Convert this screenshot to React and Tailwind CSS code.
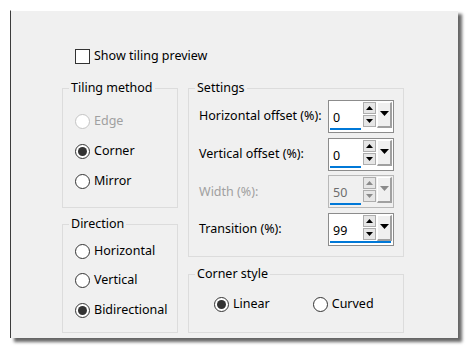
import React from "react";

const font = { fontFamily: '"Noto Sans", "Open Sans", sans-serif' };

const Radio = ({ label, checked, disabled }) => (
  <div className="flex items-center h-[16px]">
    <div
      className={
        "w-[15px] h-[15px] rounded-full border bg-white flex items-center justify-center " +
        (disabled ? "border-[#c4c4c4]" : "border-[#333333]")
      }
    >
      {checked && <div className="w-[9px] h-[9px] rounded-full bg-[#333333]" />}
    </div>
    <span className={"ml-[4px] " + (disabled ? "text-[#a0a0a0]" : "text-black")}>{label}</span>
  </div>
);

const GroupBox = ({ title, className, children }) => (
  <div className={"relative border border-[#dcdcdc] " + className}>
    <span className="absolute -top-[10px] left-[6px] bg-[#f0f0f0] px-[2px] leading-[18px] text-black">
      {title}
    </span>
    {children}
  </div>
);

const Arrow = ({ up, disabled }) => (
  <svg width="7" height="4" viewBox="0 0 7 4">
    <path
      d={up ? "M0 4 L3.5 0 L7 4 Z" : "M0 0 L3.5 4 L7 0 Z"}
      fill={disabled ? "#8a8a8a" : "#000"}
    />
  </svg>
);

const SpinBox = ({ value, disabled, focused }) => (
  <div
    className={
      "w-[66px] h-[33px] border flex flex-col " +
      (disabled ? "border-[#b8b8b8] bg-[#f0f0f0]" : "border-[#8c8c8c] bg-white")
    }
  >
    <div className="flex flex-1">
      <div
        className={
          "w-[34px] pl-[4px] pt-[9px] leading-[16px] " +
          (disabled ? "text-[#6d6d6d]" : "text-black")
        }
      >
        {value}
      </div>
      <div className="flex flex-col gap-[1px] mt-[1px]">
        <div className="w-[13px] h-[12px] border border-[#adadad] bg-[#e6e6e6] flex items-center justify-center">
          <Arrow up disabled={disabled} />
        </div>
        <div className="w-[13px] h-[12px] border border-[#adadad] bg-[#e6e6e6] flex items-center justify-center">
          <Arrow disabled={disabled} />
        </div>
      </div>
      <div className="ml-[1px] mt-[1px] w-[15px] h-[26px] bg-[#f0f0f0] border-r-2 border-b-2 border-[#a0a0a0] border-t border-t-white border-l border-l-white flex justify-center pt-[8px]">
        <svg width="9" height="5" viewBox="0 0 9 5">
          <path d="M0 0 L4.5 5 L9 0 Z" fill={disabled ? "#8a8a8a" : "#000"} />
        </svg>
      </div>
    </div>
    <div
      className={
        "h-[2px] bg-[#0078d7] ml-[1px] mb-[2px] " + (focused ? "w-[61px]" : "w-[31px]")
      }
    />
  </div>
);

const SettingRow = ({ label, value, disabled, focused }) => (
  <div className="flex items-center justify-between">
    <span className={disabled ? "text-[#a0a0a0]" : "text-black"}>{label}</span>
    <SpinBox value={value} disabled={disabled} focused={focused} />
  </div>
);

export default function App() {
  return (
    <div className="w-[469px] h-[350px] bg-white pt-[10px] pl-[10px]" style={font}>
      <div className="w-[448px] h-[328px] bg-[#f0f0f0] border-l border-l-[#3c3c3c] border-t border-t-[#ffffff] shadow-[4px_4px_3px_rgba(0,0,0,0.6)] pl-[51px] pt-[37px] text-[12.5px]">
        <div className="flex items-center h-[16px] pl-[13px]">
          <div className="w-[15px] h-[15px] border border-[#333333] bg-white" />
          <span className="ml-[4px] text-black">Show tiling preview</span>
        </div>

        <div className="flex gap-[10px] mt-[24px]">
          <div className="flex flex-col gap-[16px]">
            <GroupBox title="Tiling method" className="w-[116px] h-[120px] pt-[24px] pl-[12px]">
              <div className="flex flex-col gap-[14px]">
                <Radio label="Edge" disabled />
                <Radio label="Corner" checked />
                <Radio label="Mirror" />
              </div>
            </GroupBox>
            <GroupBox title="Direction" className="w-[116px] h-[109px] pt-[18px] pl-[12px]">
              <div className="flex flex-col gap-[13.5px]">
                <Radio label="Horizontal" />
                <Radio label="Vertical" />
                <Radio label="Bidirectional" checked />
              </div>
            </GroupBox>
          </div>

          <div className="flex flex-col gap-[17px]">
            <GroupBox title="Settings" className="w-[216px] h-[169px] pt-[11px] pl-[10px] pr-[9px]">
              <div className="flex flex-col gap-[4.7px]">
                <SettingRow label="Horizontal offset (%):" value="0" />
                <SettingRow label="Vertical offset (%):" value="0" />
                <SettingRow label="Width (%):" value="50" disabled />
                <SettingRow label="Transition (%):" value="99" focused />
              </div>
            </GroupBox>
            <GroupBox title="Corner style" className="w-[216px] h-[59px] pt-[21px] pl-[25px]">
              <div className="flex gap-[43px]">
                <Radio label="Linear" checked />
                <Radio label="Curved" />
              </div>
            </GroupBox>
          </div>
        </div>
      </div>
    </div>
  );
}
